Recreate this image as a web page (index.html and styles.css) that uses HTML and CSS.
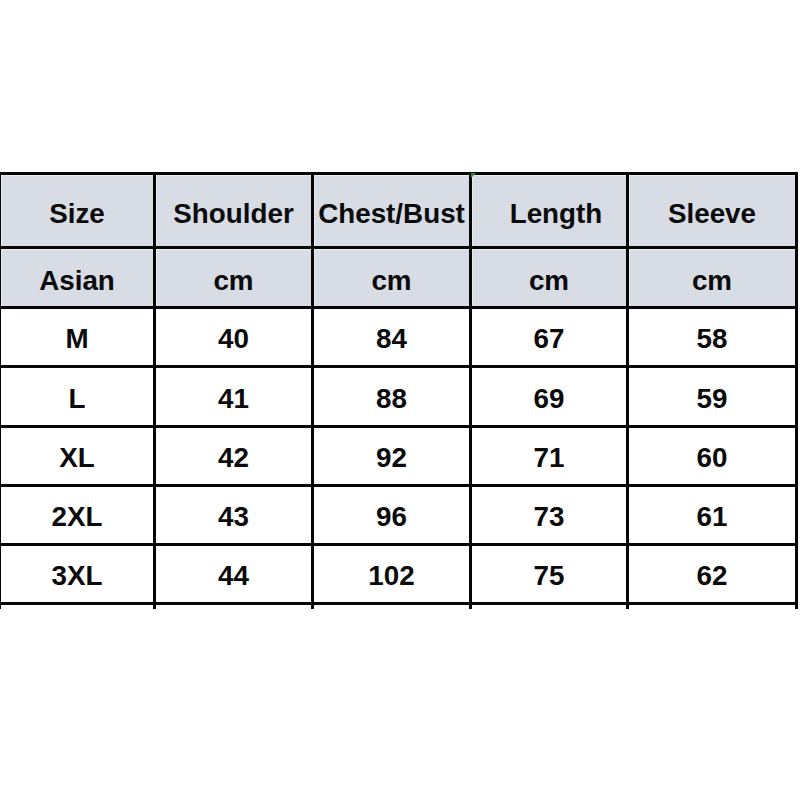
FILE: index.html
```html
<!DOCTYPE html>
<html>
<head>
<meta charset="utf-8">
<link rel="stylesheet" href="styles.css">
</head>
<body>
<div class="page">
  <div class="chart">
    <div class="grid">
      <div class="cell head r1">Size</div>
      <div class="cell head r1">Shoulder</div>
      <div class="cell head r1">Chest/Bust</div>
      <div class="cell head r1 shift">Length</div>
      <div class="cell head r1">Sleeve</div>

      <div class="cell head r2">Asian</div>
      <div class="cell head r2">cm</div>
      <div class="cell head r2">cm</div>
      <div class="cell head r2">cm</div>
      <div class="cell head r2">cm</div>

      <div class="cell">M</div><div class="cell">40</div><div class="cell">84</div><div class="cell">67</div><div class="cell">58</div>
      <div class="cell">L</div><div class="cell">41</div><div class="cell">88</div><div class="cell">69</div><div class="cell">59</div>
      <div class="cell">XL</div><div class="cell">42</div><div class="cell">92</div><div class="cell">71</div><div class="cell">60</div>
      <div class="cell">2XL</div><div class="cell">43</div><div class="cell">96</div><div class="cell">73</div><div class="cell">61</div>
      <div class="cell">3XL</div><div class="cell">44</div><div class="cell">102</div><div class="cell">75</div><div class="cell">62</div>
    </div>
    <div class="stubs">
      <div></div><div></div><div></div><div></div><div></div>
    </div>
    <span class="mark"></span>
  </div>
</div>
</body>
</html>
```
FILE: styles.css
```css
html, body {
  margin: 0;
  padding: 0;
  background: #ffffff;
}

.page {
  width: 800px;
  height: 800px;
  padding-top: 172px;
  box-sizing: border-box;
}

.chart {
  position: relative;
  width: 798px;
}

.grid {
  display: grid;
  grid-template-columns: 152px 155px 155px 154px 166px;
  grid-template-rows: 71px 57px 56px 57px 56px 56px 56px;
  gap: 3px;
  padding: 3px 3px 3px 1px;
  background: #050505;
}

.cell {
  background: #ffffff;
  display: flex;
  align-items: center;
  justify-content: center;
  padding-top: 4px;
  box-sizing: border-box;
  font-family: "Liberation Sans", Arial, sans-serif;
  font-weight: bold;
  font-size: 27.8px;
  color: #0b0b0b;
  white-space: nowrap;
}

.head {
  background: #d7dce5;
  box-shadow: inset 1px 1px 0 #e9ecf1;
}

.r1 {
  padding-top: 6px;
}

.r2 {
  padding-top: 7px;
}

.shift {
  padding-left: 14px;
}

.stubs {
  display: grid;
  grid-template-columns: 152px 155px 155px 154px 166px;
  gap: 3px;
  padding: 0 3px 0 1px;
  height: 4px;
  background: #050505;
}

.stubs div {
  background: #ffffff;
}

.mark {
  position: absolute;
  left: 471px;
  top: 1px;
  width: 0;
  height: 0;
  border-top: 5px solid #2f8a3a;
  border-right: 5px solid transparent;
}
```
